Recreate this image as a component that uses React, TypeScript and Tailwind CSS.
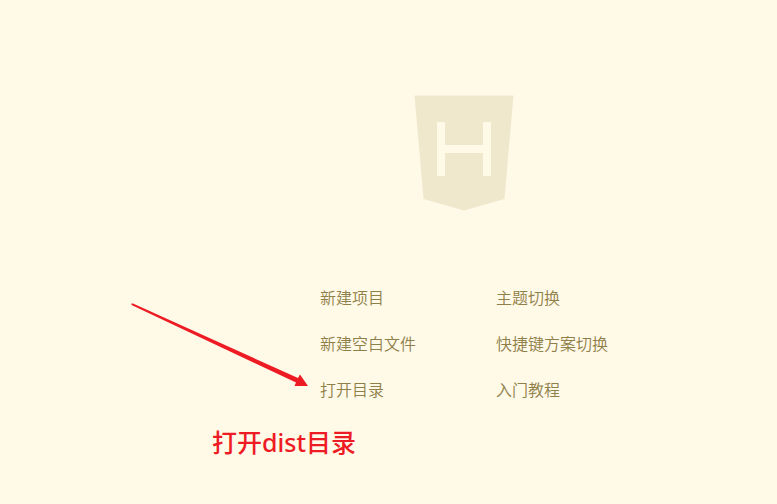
const actions = [
  "新建项目",
  "主题切换",
  "新建空白文件",
  "快捷键方案切换",
  "打开目录",
  "入门教程",
];

function Logo() {
  return (
    <svg width="100" height="116" viewBox="0 0 100 116" role="img" aria-label="HBuilder">
      <path d="M0.5 0.5H99.5L90.5 104L50 115.5L9.5 104Z" fill="#efe8cd" />
      <path d="M23 27H31V50H69V27H77V81H69V58H31V81H23Z" fill="#fff9e8" />
    </svg>
  );
}

function Annotation() {
  return (
    <div className="pointer-events-none absolute top-[303px] left-[131px]">
      <svg width="178" height="84" viewBox="0 0 178 84" aria-hidden="true">
        <path
          d="M0.5 0.5L2 0.5L167 75L169 71.5L177 83L163.5 83L165 79.5L0.5 2Z"
          fill="#ed1c24"
        />
      </svg>
      <p className="absolute top-[123px] left-[81px] font-['Noto_Sans','Noto_Sans_CJK_SC',sans-serif] text-[25px] leading-8 font-medium whitespace-nowrap text-[#ed1c24]">
        打开dist目录
      </p>
    </div>
  );
}

export default function App() {
  return (
    <div className="relative min-h-screen bg-[#fff9e8] pl-[151px] font-['Noto_Sans_CJK_SC',sans-serif]">
      <main className="flex flex-col items-center pt-[95px]">
        <Logo />
        <nav className="mt-[74px] grid grid-cols-[176px_112px] gap-y-[22px]">
          {actions.map((label) => (
            <a
              key={label}
              href="#"
              className="text-[16px] leading-6 font-[350] whitespace-nowrap text-[#8f7f48]"
            >
              {label}
            </a>
          ))}
        </nav>
      </main>
      <Annotation />
    </div>
  );
}
